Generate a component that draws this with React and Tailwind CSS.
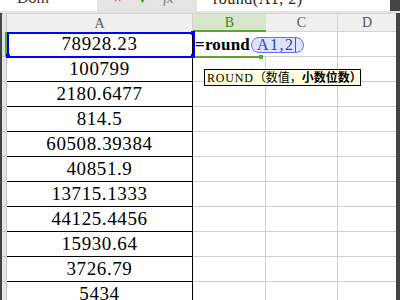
import React from 'react';

const values = [
  '78928.23',
  '100799',
  '2180.6477',
  '814.5',
  '60508.39384',
  '40851.9',
  '13715.1333',
  '44125.4456',
  '15930.64',
  '3726.79',
  '5434',
];

const serif = { fontFamily: '"Liberation Serif", "Noto Sans CJK SC", serif' };

function TopBar() {
  return (
    <div className="flex h-[11px] overflow-hidden">
      {/* name box */}
      <div className="w-[97px] bg-white overflow-hidden">
        <div className="-mt-[10px] pl-[17px] text-[16px] leading-none text-[#333]" style={serif}>
          Dom
        </div>
      </div>
      {/* buttons */}
      <div className="w-[100px] bg-[#e4e4e4] flex items-start overflow-hidden">
        <span className="-mt-[8px] ml-[17px] text-[13px] leading-none text-[#e05050]">×</span>
        <span className="-mt-[6px] ml-[16px] text-[10px] leading-none text-[#3a9a3a]">▼</span>
        <span className="-mt-[8px] ml-[16px] text-[14px] italic leading-none text-[#777]" style={serif}>
          fx
        </span>
      </div>
      {/* formula */}
      <div className="w-[193px] bg-white overflow-hidden">
        <div className="-mt-[9px] pl-[16px] text-[16px] tracking-[0.5px] leading-none text-[#222]" style={serif}>
          round(A1, 2)
        </div>
      </div>
      <div className="flex-1 bg-[#444]" />
    </div>
  );
}

function HeaderRow() {
  return (
    <div className="flex h-[19px] border-t border-[#d4d4d4] text-[14px] text-[#555]" style={serif}>
      <div className="w-[5px] bg-[#e6e6e6] border-r border-[#c4c4c4]" />
      <div className="w-[186px] bg-[#efefef] border-r border-[#d4d4d4] flex items-center justify-center">A</div>
      <div className="w-[73px] bg-[#d6e5cc] border-b-2 border-[#5fa431] flex items-center justify-center text-[#3d8a1d]">
        B
      </div>
      <div className="w-[72px] bg-[#efefef] border-r border-b border-[#d4d4d4] flex items-center justify-center">C</div>
      <div className="w-[58px] bg-[#efefef] border-b border-[#d4d4d4] flex items-center justify-center">D</div>
    </div>
  );
}

function Row({ value, first }) {
  return (
    <div className="flex h-[25px]">
      <div
        className={
          first
            ? 'w-[5px] bg-[#d7e6ce] border-r-2 border-b border-r-[#5fa431] border-b-[#c4c4c4]'
            : 'w-[5px] bg-[#e6e6e6] border-r border-b border-[#c4c4c4]'
        }
      />
      <div
        className="w-[186px] border-r border-b border-black flex items-center justify-center text-[19px] tracking-[0.6px] text-black"
        style={serif}
      >
        {value}
      </div>
      <div className="w-[73px] border-r border-b border-[#cfcfcf]" />
      <div className="w-[72px] border-r border-b border-[#cfcfcf]" />
      <div className="w-[58px] border-b border-[#cfcfcf]" />
    </div>
  );
}

export default function App() {
  return (
    <div className="relative w-[400px] h-[300px] overflow-hidden bg-white">
      <TopBar />
      <div className="h-[2px] bg-[#e2e2e2]" />
      <div className="flex">
        <div className="w-[2px] bg-[#444] self-stretch" />
        <div className="w-[394px]">
          <HeaderRow />
          {values.map((v, i) => (
            <Row key={i} value={v} first={i === 0} />
          ))}
        </div>
        <div className="w-[4px] bg-[#444] self-stretch" />
      </div>

      {/* A1 reference box */}
      <div className="absolute left-[7px] top-[32px] w-[188px] h-[26px] border-2 border-[#0000ff]" />
      <div className="absolute left-[6px] top-[54px] w-[4px] h-[4px] bg-[#0000ff]" />
      <div className="absolute left-[191px] top-[54px] w-[4px] h-[4px] bg-[#0000ff]" />
      <div className="absolute left-[191px] top-[31px] w-[4px] h-[4px] bg-[#0000ff]" />

      {/* B1 editor */}
      <div className="absolute left-[195px] top-[33px] w-[110px] h-[23px] bg-white flex items-center z-10">
        <span className="text-[17px] font-bold tracking-[0.2px] text-black leading-none" style={serif}>
          =round
        </span>
        <span className="ml-[1px] h-[16px] pl-[5px] pr-[7px] flex items-center rounded-full border-[1.5px] border-[#6b6bff] bg-[#dfe3ff]">
          <span className="text-[16px] tracking-[1.5px] text-[#2a3fd0] leading-none" style={serif}>
            A1,2
          </span>
          <span className="w-[1px] h-[14px] bg-[#7a5a20]" />
        </span>
      </div>
      <div className="absolute left-[195px] top-[56px] w-[64px] h-[2px] bg-[#5fa431] z-10" />
      <div className="absolute left-[259px] top-[55px] w-[4px] h-[4px] bg-[#5fa431] z-10" />

      {/* tooltip */}
      <div
        className="absolute left-[204px] top-[69px] w-[157px] h-[17px] bg-[#ffffe1] border border-black flex items-center pl-[2px] text-[12px] leading-none text-black whitespace-nowrap z-20"
        style={serif}
      >
        <span className="tracking-[0.8px]">ROUND</span>
        <span>（数值，</span>
        <span className="font-bold">小数位数）</span>
      </div>
    </div>
  );
}
